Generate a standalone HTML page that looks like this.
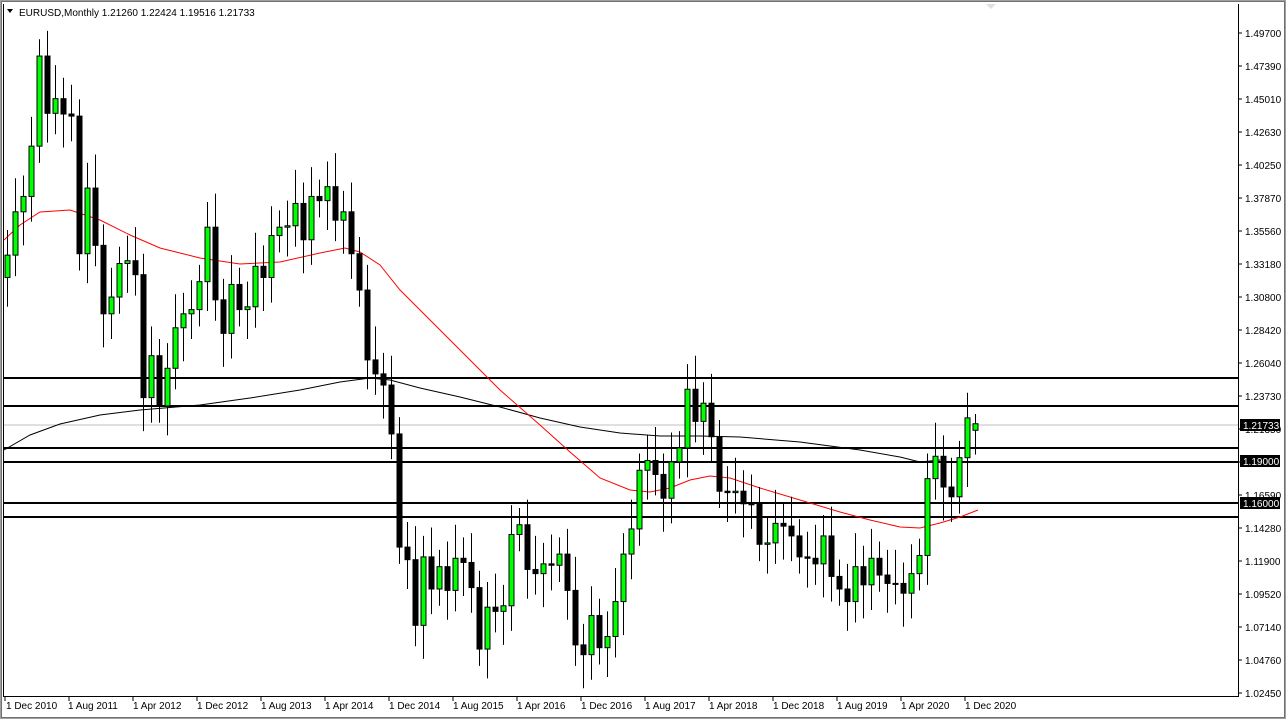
<!DOCTYPE html>
<html><head><meta charset="utf-8"><style>
html,body{margin:0;padding:0;background:#fff;width:1286px;height:719px;overflow:hidden;font-family:"Liberation Sans",sans-serif}
svg text{font-family:"Liberation Sans",sans-serif;font-size:10px}
</style></head><body>
<svg id="c" width="1286" height="719" xmlns="http://www.w3.org/2000/svg">
<rect x="0" y="0" width="1286" height="719" fill="#fff"/>
<rect x="0.5" y="0.5" width="1285" height="718" fill="none" stroke="#a0a0a0"/>
<rect x="1.5" y="1.5" width="1283" height="716" fill="none" stroke="#707070"/>
<polygon points="986,4 996,4 991,9" fill="#e0e0e0"/>
<line x1="4" y1="425" x2="1238" y2="425" stroke="#c0c0c0"/>
<g stroke="#000" stroke-width="2">
<line x1="4" y1="378" x2="1238" y2="378"/><line x1="4" y1="406" x2="1238" y2="406"/>
<line x1="4" y1="448" x2="1238" y2="448"/><line x1="4" y1="462" x2="1238" y2="462"/>
<line x1="4" y1="503" x2="1238" y2="503"/><line x1="4" y1="517" x2="1238" y2="517"/>
</g>
<polyline fill="none" stroke="#000" stroke-width="1" points="4,450 30,435 60,424 100,415 140,410 200,405 250,398 300,390 340,382 370,378 390,380 420,388 460,397 500,407 540,418 580,427 620,433 660,436 700,436 740,437 800,442 860,450 900,457 920,462 940,460"/>
<polyline fill="none" stroke="#ff0000" stroke-width="1" points="4,240 20,225 40,212 70,210 100,220 130,235 160,248 200,258 240,264 280,262 320,253 345,248 360,252 380,265 400,290 430,320 460,350 500,390 540,425 570,452 600,478 630,490 650,492 670,488 690,480 710,476 730,478 760,488 800,500 840,512 870,520 900,527 920,528 940,523 960,517 978,510"/>
<g id="candles"></g>
<line x1="1238.5" y1="4" x2="1238.5" y2="697" stroke="#000"/>
<line x1="4" y1="696.5" x2="1239" y2="696.5" stroke="#000"/>
<line x1="3.5" y1="4" x2="3.5" y2="697" stroke="#000"/>
<g fill="#000" id="rl">
<text x="1245" y="37">1.49700</text><text x="1245" y="70">1.47390</text><text x="1245" y="103">1.45010</text>
<text x="1245" y="136">1.42630</text><text x="1245" y="169">1.40250</text><text x="1245" y="202">1.37870</text>
<text x="1245" y="235">1.35560</text><text x="1245" y="268">1.33180</text><text x="1245" y="301">1.30800</text>
<text x="1245" y="334">1.28420</text><text x="1245" y="367">1.26040</text><text x="1245" y="400">1.23730</text>
<text x="1245" y="433">1.21350</text><text x="1245" y="499">1.16590</text><text x="1245" y="532">1.14280</text>
<text x="1245" y="565">1.11900</text><text x="1245" y="598">1.09520</text><text x="1245" y="631">1.07140</text>
<text x="1245" y="664">1.04760</text><text x="1245" y="697">1.02450</text>
</g>
<g stroke="#000" id="rt"></g>
<rect x="1240" y="419" width="40" height="12" fill="#000"/><text x="1243" y="429" fill="#fff">1.21733</text>
<rect x="1240" y="455" width="40" height="12" fill="#000"/><text x="1243" y="465" fill="#fff">1.19000</text>
<rect x="1240" y="497" width="40" height="12" fill="#000"/><text x="1243" y="507" fill="#fff">1.16000</text>
<g fill="#000">
<text x="6" y="709">1 Dec 2010</text><text x="68" y="709">1 Aug 2011</text><text x="133" y="709">1 Apr 2012</text>
<text x="197" y="709">1 Dec 2012</text><text x="261" y="709">1 Aug 2013</text><text x="325" y="709">1 Apr 2014</text>
<text x="389" y="709">1 Dec 2014</text><text x="453" y="709">1 Aug 2015</text><text x="517" y="709">1 Apr 2016</text>
<text x="581" y="709">1 Dec 2016</text><text x="645" y="709">1 Aug 2017</text><text x="709" y="709">1 Apr 2018</text>
<text x="773" y="709">1 Dec 2018</text><text x="837" y="709">1 Aug 2019</text><text x="901" y="709">1 Apr 2020</text>
<text x="965" y="709">1 Dec 2020</text>
</g>
<g stroke="#000" id="bt"></g>
<polygon points="7,9 13,9 10,13" fill="#000"/>
<text x="19" y="16" fill="#000">EURUSD,Monthly  1.21260 1.22424 1.19516 1.21733</text>
</svg>
<script>
var C=[1.3220,1.3380,1.3690,1.3800,1.4160,1.4805,1.4395,1.4500,1.4390,1.4375,1.3390,1.3860,1.3450,1.2960,
1.3080,1.3320,1.3340,1.3240,1.2360,1.2660,1.2300,1.2570,1.2860,1.2960,1.2990,1.3190,
1.3580,1.3060,1.2820,1.3170,1.2990,1.3010,1.3300,1.3220,1.3520,1.3580,1.3590,1.3750,
1.3490,1.3800,1.3770,1.3870,1.3630,1.3690,1.3390,1.3130,1.2630,1.2530,1.2450,1.2100,
1.1290,1.1200,1.0730,1.1220,1.0990,1.1150,1.0980,1.1210,1.1180,1.1000,1.0560,1.0860,
1.0830,1.0870,1.1380,1.1450,1.1130,1.1100,1.1170,1.1160,1.1240,1.0980,1.0590,1.0520,
1.0800,1.0570,1.0650,1.0900,1.1240,1.1420,1.1840,1.1910,1.1810,1.1640,1.1900,1.2000,
1.2420,1.2190,1.2320,1.2080,1.1690,1.1680,1.1690,1.1600,1.1600,1.1310,1.1320,1.1460,
1.1440,1.1370,1.1220,1.1210,1.1170,1.1370,1.1080,1.0990,1.0900,1.1150,1.1020,1.1210,
1.1090,1.1030,1.1030,1.0960,1.1100,1.1230,1.1780,1.1940,1.1720,1.1650,1.1930,1.2215,1.2173];
function y(p){return 33+(1.497-p)*1397;}
var g=document.getElementById('candles'),s='';
for(var i=1;i<C.length;i++){var o=C[i-1],c=C[i];if(i==C.length-1)o=1.2126;
var x=7+8*(i-1),hi=Math.max(o,c)+0.012+((i*7)%5)*0.003,lo=Math.min(o,c)-0.012-((i*3)%5)*0.003;
if(i==C.length-1){hi=1.22424;lo=1.19516;}
s+='<line x1="'+(x+.5)+'" x2="'+(x+.5)+'" y1="'+y(hi)+'" y2="'+y(lo)+'" stroke="#000"/>';
var t=y(Math.max(o,c)),b=y(Math.min(o,c));if(b-t<1)b=t+1;
s+='<rect x="'+(x-2)+'" y="'+t+'" width="5" height="'+(b-t)+'" fill="'+(c>=o?'#00ff00':'#000')+'" stroke="#000" stroke-width="1"/>';}
g.innerHTML=s;
var rt='';for(var k=0;k<21;k++){var yy=33+33*k;rt+='<line x1="1238" x2="1242" y1="'+yy+'" y2="'+yy+'"/>';}
document.getElementById('rt').innerHTML=rt;
var bt='';for(var k=0;k<16;k++){var xx=5+64*k;bt+='<line x1="'+xx+'" x2="'+xx+'" y1="696" y2="701"/>';}
document.getElementById('bt').innerHTML=bt;
</script>
</body></html>
